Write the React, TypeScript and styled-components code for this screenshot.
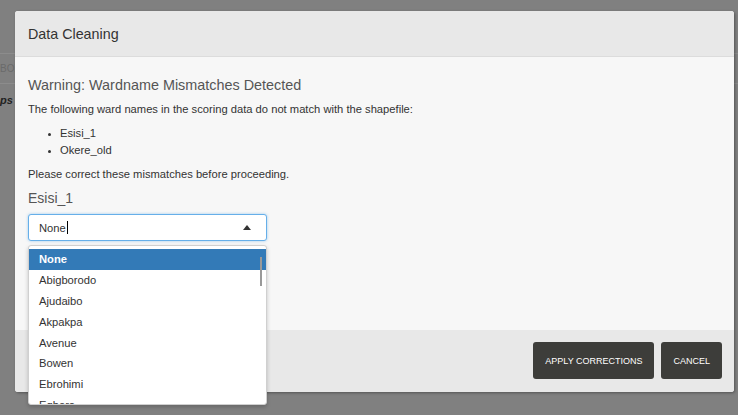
import styled, { createGlobalStyle } from 'styled-components';

const GlobalStyle = createGlobalStyle`
  html, body {
    margin: 0;
    padding: 0;
    width: 738px;
    height: 415px;
    overflow: hidden;
    background: #808080;
    font-family: "Liberation Sans", Arial, sans-serif;
  }
`;

const Backdrop = styled.div`
  position: fixed;
  inset: 0;
  background: #808080;
`;

const BgToolbar = styled.div`
  margin-top: 53px;
  height: 29px;
  border-top: 1px solid #8c8c8c;
  border-bottom: 1px solid #8c8c8c;
  display: flex;
  align-items: center;
  font-size: 10px;
  color: #6a6a6a;
`;

const BgText = styled.div`
  margin-top: 10px;
  font-size: 11px;
  font-weight: bold;
  font-style: italic;
  color: #222;
`;

const Modal = styled.div`
  position: fixed;
  left: 15px;
  top: 11px;
  width: 719px;
  height: 381px;
  border-radius: 3px;
  background: #f7f7f7;
  box-shadow: 1px 1px 3px rgba(0, 0, 0, 0.35);
  display: flex;
  flex-direction: column;
`;

const Header = styled.div`
  height: 45px;
  border-bottom: 1px solid #dcdcdc;
  background: #e8e8e8;
  border-radius: 3px 3px 0 0;
  display: flex;
  align-items: center;
  padding: 0 13px;
  font-size: 14.3px;
  color: #333;
`;

const Body = styled.div`
  flex: 1;
  padding: 20px 13px 0;
  color: #333;
`;

const Title = styled.h4`
  margin: 0 0 10px;
  font-size: 14.4px;
  font-weight: normal;
  color: #555;
`;

const Para = styled.p`
  margin: 0;
  font-size: 11.2px;
  color: #333;
`;

const List = styled.ul`
  margin: 10px 0 9px;
  padding-left: 32px;
  font-size: 11.2px;
  line-height: 17px;
  color: #333;

  li::marker {
    font-size: 9px;
  }
`;

const FieldLabel = styled.div`
  margin-top: 10px;
  font-size: 14px;
  color: #555;
`;

const SelectWrap = styled.div`
  position: relative;
  margin-top: 8px;
  width: 239px;
`;

const SelectBox = styled.div`
  box-sizing: border-box;
  height: 27px;
  border: 1px solid #66afe9;
  border-radius: 3px;
  background: #fff;
  box-shadow: 0 0 3px rgba(102, 175, 233, 0.6);
  display: flex;
  align-items: center;
  padding: 0 10px;
  font-size: 11.2px;
  color: #333;
`;

const Cursor = styled.span`
  display: inline-block;
  width: 1px;
  height: 13px;
  background: #000;
  margin-left: 1px;
`;

const Caret = styled.span`
  margin-left: auto;
  margin-right: 5px;
  width: 0;
  height: 0;
  border-left: 4px solid transparent;
  border-right: 4px solid transparent;
  border-bottom: 5px solid #333;
`;

const Menu = styled.div`
  position: absolute;
  left: 0;
  top: 31px;
  width: 239px;
  height: 160px;
  box-sizing: border-box;
  border: 1px solid #d0d0d0;
  border-radius: 3px;
  background: #fff;
  box-shadow: 0 2px 4px rgba(0, 0, 0, 0.2);
  padding-top: 3px;
  overflow: hidden;
  z-index: 5;
`;

const Option = styled.div<{ $active?: boolean }>`
  height: 20.8px;
  display: flex;
  align-items: center;
  padding-left: 10px;
  font-size: 11.2px;
  color: ${({ $active }) => ($active ? '#fff' : '#333')};
  background: ${({ $active }) => ($active ? '#337ab7' : 'transparent')};
  font-weight: ${({ $active }) => ($active ? 'bold' : 'normal')};
`;

const Scrollbar = styled.div`
  position: absolute;
  right: 4px;
  top: 11px;
  width: 2px;
  height: 29px;
  background: #999;
`;

const Footer = styled.div`
  height: 62px;
  background: #e8e8e8;
  border-radius: 0 0 3px 3px;
  display: flex;
  justify-content: flex-end;
  align-items: flex-start;
  gap: 7px;
  padding: 12px 12px 0;
  box-sizing: border-box;
`;

const Button = styled.button`
  height: 37px;
  padding: 0 12px;
  border: none;
  border-radius: 3px;
  background: #3d3d3a;
  color: #fff;
  font-family: "Liberation Sans", Arial, sans-serif;
  font-size: 9px;
  text-transform: uppercase;
`;

const wards = ['None', 'Abigborodo', 'Ajudaibo', 'Akpakpa', 'Avenue', 'Bowen', 'Ebrohimi', 'Egbero'];

export default function App() {
  return (
    <>
      <GlobalStyle />
      <Backdrop>
        <BgToolbar>BOX</BgToolbar>
        <BgText>ps</BgText>
      </Backdrop>
      <Modal>
        <Header>Data Cleaning</Header>
        <Body>
          <Title>Warning: Wardname Mismatches Detected</Title>
          <Para>The following ward names in the scoring data do not match with the shapefile:</Para>
          <List>
            <li>Esisi_1</li>
            <li>Okere_old</li>
          </List>
          <Para>Please correct these mismatches before proceeding.</Para>
          <FieldLabel>Esisi_1</FieldLabel>
          <SelectWrap>
            <SelectBox>
              None<Cursor />
              <Caret />
            </SelectBox>
            <Menu>
              {wards.map((w, i) => (
                <Option key={w} $active={i === 0}>{w}</Option>
              ))}
              <Scrollbar />
            </Menu>
          </SelectWrap>
        </Body>
        <Footer>
          <Button>Apply Corrections</Button>
          <Button>Cancel</Button>
        </Footer>
      </Modal>
    </>
  );
}
